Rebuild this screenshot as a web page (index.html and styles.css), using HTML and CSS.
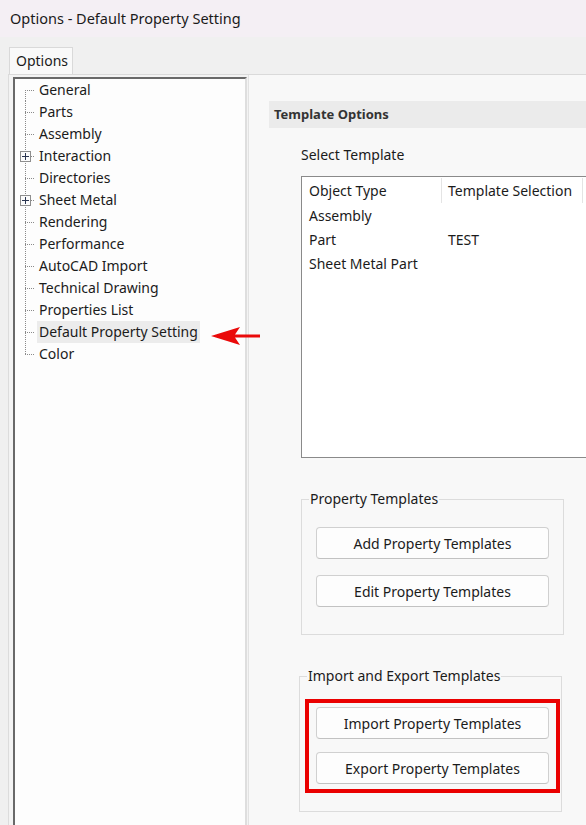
FILE: index.html
```html
<!DOCTYPE html>
<html>
<head>
<meta charset="utf-8">
<title>Options - Default Property Setting</title>
<link rel="stylesheet" href="styles.css">
</head>
<body>
<div class="titlebar">Options - Default Property Setting</div>
<div class="client">
  <div class="tabs"><div class="tab">Options</div></div>
  <div class="page">
    <div class="tree-col">
      <ul class="tree">
        <li class="first"><span class="gut"></span><span class="lbl">General</span></li>
        <li><span class="gut"></span><span class="lbl">Parts</span></li>
        <li><span class="gut"></span><span class="lbl">Assembly</span></li>
        <li><span class="gut"><span class="plus"></span></span><span class="lbl">Interaction</span></li>
        <li><span class="gut"></span><span class="lbl">Directories</span></li>
        <li><span class="gut"><span class="plus"></span></span><span class="lbl">Sheet Metal</span></li>
        <li><span class="gut"></span><span class="lbl">Rendering</span></li>
        <li><span class="gut"></span><span class="lbl">Performance</span></li>
        <li><span class="gut"></span><span class="lbl">AutoCAD Import</span></li>
        <li><span class="gut"></span><span class="lbl">Technical Drawing</span></li>
        <li><span class="gut"></span><span class="lbl">Properties List</span></li>
        <li><span class="gut"></span><span class="lbl sel">Default Property Setting</span></li>
        <li class="last"><span class="gut"></span><span class="lbl">Color</span></li>
      </ul>
    </div>
    <div class="panel">
      <div class="section-head">Template Options</div>
      <div class="sub">
        <div class="label">Select Template</div>
        <div class="table">
          <div class="thead">
            <div class="c1">Object Type</div>
            <div class="c2">Template Selection</div>
          </div>
          <div class="row"><div class="c1">Assembly</div><div class="c2"></div></div>
          <div class="row"><div class="c1">Part</div><div class="c2">TEST</div></div>
          <div class="row"><div class="c1">Sheet Metal Part</div><div class="c2"></div></div>
        </div>
        <fieldset class="group g1">
          <legend>Property Templates</legend>
          <div class="btns">
            <button class="btn">Add Property Templates</button>
            <button class="btn">Edit Property Templates</button>
          </div>
        </fieldset>
        <fieldset class="group g2">
          <legend>Import and Export Templates</legend>
          <div class="redbox">
            <button class="btn">Import Property Templates</button>
            <button class="btn">Export Property Templates</button>
          </div>
        </fieldset>
      </div>
    </div>
  </div>
</div>
<svg class="arrow" width="50" height="20" viewBox="0 0 50 20">
  <path d="M0 10 L29 1 L24 8.5 L49 8.5 L49 11.5 L24 11.5 L29 19 Z" fill="#ea0a0a"/>
</svg>
</body>
</html>
```
FILE: styles.css
```css
html, body {
  margin: 0;
  padding: 0;
  width: 586px;
  height: 825px;
  overflow: hidden;
  background: #f0f0f0;
  font-family: "Noto Sans", "DejaVu Sans", sans-serif;
  color: #1b1b1b;
  position: relative;
}

.titlebar {
  height: 37px;
  line-height: 37px;
  padding-left: 10px;
  font-size: 14.5px;
  background: #f4eff4;
  color: #1a1a1a;
}

.client {
  padding: 10px 0 0 8px;
  overflow: hidden;
}

.tabs {
  display: flex;
  height: 27px;
}

.tab {
  margin-left: 1px;
  width: 64px;
  height: 27px;
  box-sizing: border-box;
  border: 1px solid #d9d9d9;
  border-bottom: none;
  background: #f9f9f9;
  font-size: 14px;
  line-height: 26px;
  padding-left: 6px;
  position: relative;
  z-index: 1;
  margin-bottom: -1px;
}

.page {
  display: flex;
  height: 760px;
  border-top: 1px solid #dadada;
  border-left: 1px solid #dcdcdc;
  background: #f3f3f3;
}

.tree-col {
  padding: 2px 0 0 4px;
  display: flex;
}

.tree {
  list-style: none;
  margin: 0;
  padding: 0;
  width: 234px;
  box-sizing: border-box;
  background: #fdfdfd;
  border-top: 2px solid #696969;
  border-left: 2px solid #696969;
  border-right: 2px solid #dedede;
  font-size: 14px;
}

.tree li {
  display: flex;
  align-items: center;
  height: 22px;
}

.gut {
  width: 22px;
  height: 22px;
  flex: none;
  display: flex;
  align-items: center;
  background:
    repeating-linear-gradient(to right, #8a8a8a 0 1px, transparent 1px 2px) 10px 11px / 10px 1px no-repeat,
    repeating-linear-gradient(to bottom, #8a8a8a 0 1px, transparent 1px 2px) 10px 0 / 1px 22px no-repeat;
}

.tree li.first .gut {
  background:
    repeating-linear-gradient(to right, #8a8a8a 0 1px, transparent 1px 2px) 10px 11px / 10px 1px no-repeat,
    repeating-linear-gradient(to bottom, #8a8a8a 0 1px, transparent 1px 2px) 10px 11px / 1px 11px no-repeat;
}

.tree li.last .gut {
  background:
    repeating-linear-gradient(to right, #8a8a8a 0 1px, transparent 1px 2px) 10px 11px / 10px 1px no-repeat,
    repeating-linear-gradient(to bottom, #8a8a8a 0 1px, transparent 1px 2px) 10px 0 / 1px 12px no-repeat;
}

.plus {
  margin-left: 5px;
  width: 11px;
  height: 11px;
  box-sizing: border-box;
  border: 1px solid #8e8e8e;
  background:
    linear-gradient(#2a3550, #2a3550) center / 7px 1px no-repeat,
    linear-gradient(#2a3550, #2a3550) center / 1px 7px no-repeat,
    #fbfbfb;
}

.lbl {
  padding: 0 2px;
  line-height: 22px;
  white-space: nowrap;
}

.lbl.sel {
  background: #ececec;
}

.panel {
  margin-left: 1px;
  border-left: 1px solid #e2e2e2;
  background: #f8f8f8;
  flex: 1;
  min-width: 0;
  overflow: hidden;
  padding: 26px 0 0 20px;
}

.section-head {
  width: 330px;
  height: 27px;
  line-height: 27px;
  background: #ebebeb;
  font-size: 13px;
  font-weight: bold;
  color: #333;
  padding-left: 5px;
  box-sizing: border-box;
}

.sub {
  padding-left: 32px;
}

.label {
  margin-top: 17px;
  font-size: 14px;
  line-height: 20px;
  height: 20px;
}

.table {
  margin-top: 11px;
  width: 320px;
  height: 282px;
  box-sizing: border-box;
  border: 1px solid #8a8a8a;
  background: #ffffff;
  font-size: 14px;
}

.thead, .row {
  display: flex;
}

.thead {
  height: 27px;
  align-items: center;
}

.thead .c1 {
  border-right: 1px solid #e4e4e4;
  height: 25px;
  line-height: 25px;
}

.thead .c2 {
  border-right: 1px solid #e4e4e4;
  height: 25px;
  line-height: 25px;
}

.c1 {
  width: 140px;
  padding-left: 7px;
  box-sizing: border-box;
  white-space: nowrap;
}

.c2 {
  width: 141px;
  padding-left: 6px;
  box-sizing: border-box;
  white-space: nowrap;
}

.row {
  height: 24px;
  line-height: 24px;
}

.group {
  margin: 0;
  padding: 0;
  width: 263px;
  box-sizing: border-box;
  border: 1px solid #dcdcdc;
  min-width: 0;
}

.group legend {
  font-size: 14px;
  line-height: 20px;
  padding: 0 1px;
  margin-left: 7px;
}

.g1 {
  margin-top: 31px;
  height: 146px;
}

.btns {
  padding: 18px 14px 0 14px;
  display: flex;
  flex-direction: column;
  gap: 16px;
}

.g2 {
  margin-top: 31px;
  margin-left: -2px;
  height: 146px;
}

.redbox {
  margin: 13px 0 0 5px;
  width: 255px;
  height: 94px;
  box-sizing: border-box;
  border: 4px solid #ea0000;
  padding: 4px 7px 0 7px;
  display: flex;
  flex-direction: column;
  gap: 13px;
}

.btn {
  width: 233px;
  height: 32px;
  box-sizing: border-box;
  border: 1px solid #d0d0d0;
  border-bottom-color: #c2c2c2;
  border-radius: 4px;
  background: #fdfdfd;
  font-family: "Noto Sans", "DejaVu Sans", sans-serif;
  font-size: 14px;
  color: #1b1b1b;
  padding: 0;
  text-align: center;
}

.arrow {
  position: absolute;
  left: 211px;
  top: 326px;
}
```
